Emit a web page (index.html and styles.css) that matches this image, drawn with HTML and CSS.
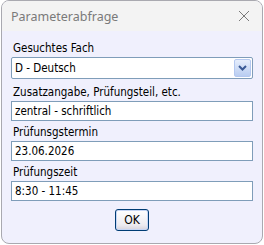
FILE: index.html
```html
<!DOCTYPE html>
<html>
<head>
<meta charset="utf-8">
<link rel="stylesheet" href="styles.css">
</head>
<body>
<div class="window">
  <div class="titlebar">
    <span class="title">Parameterabfrage</span>
    <svg class="close" width="12" height="12" viewBox="0 0 12 12"><path d="M1 1 L11 11 M11 1 L1 11" stroke="#7a7a7a" stroke-width="1" fill="none"/></svg>
  </div>
  <div class="content">
    <div class="label">Gesuchtes Fach</div>
    <div class="select">
      <span class="value">D - Deutsch</span>
      <span class="dropbtn"><svg width="9" height="6" viewBox="0 0 9 6"><path d="M1 1 L4.5 4.5 L8 1" stroke="#3a5a96" stroke-width="2" fill="none"/></svg></span>
    </div>
    <div class="label">Zusatzangabe, Prüfungsteil, etc.</div>
    <div class="input">zentral - schriftlich</div>
    <div class="label">Prüfunsgstermin</div>
    <div class="input">23.06.2026</div>
    <div class="label">Prüfungszeit</div>
    <div class="input">8:30 - 11:45</div>
    <div class="actions"><button class="ok">OK</button></div>
  </div>
</div>
</body>
</html>
```
FILE: styles.css
```css
html, body { margin: 0; padding: 0; background: #ffffff; }
body { padding-left: 1px; }
.window {
  width: 260px; height: 242px;
  border: 1px solid #a9a9b0;
  border-radius: 8px;
  overflow: hidden;
  background: #f0f0fd;
  display: flex; flex-direction: column;
}
.titlebar {
  height: 30px;
  background: #f3f3f3;
  display: flex; align-items: center; justify-content: space-between;
  padding: 0 12px 0 9px;
}
.title { font-family: "Noto Sans", "Open Sans", sans-serif; font-size: 12.5px; color: #7a7a7a; }
.close { display: block; }
.content {
  padding: 10px 9px 0 9px;
  font-family: "DejaVu Sans Condensed", "DejaVu Sans", sans-serif;
  font-size: 11.5px;
  color: #000;
  display: flex; flex-direction: column;
}
.label { height: 14px; line-height: 14px; padding-left: 2px; margin-bottom: 2px; }
.select {
  height: 20px;
  border: 1px solid #7f9db9;
  border-radius: 2px;
  background: #fff;
  display: flex; align-items: center; justify-content: space-between;
  padding: 0 1px 0 3px;
  margin-bottom: 6px;
}
.dropbtn {
  width: 15px; height: 16px;
  border: 1px solid #b4c8f0;
  border-radius: 2px;
  background: linear-gradient(#e6eefc, #b9cdf1);
  display: flex; align-items: center; justify-content: center;
}
.dropbtn svg { display: block; }
.input {
  height: 18px;
  line-height: 18px;
  border: 1px solid #7f9db9;
  background: #fff;
  padding: 0 3px;
  margin-bottom: 4px;
}
.actions { display: flex; justify-content: center; padding-top: 4px; }
.ok {
  width: 34px; height: 22px;
  border: 1px solid #003c74;
  border-radius: 3px;
  background: linear-gradient(#ffffff, #ecebf0 75%, #d6d3dc);
  box-shadow: inset 0 0 0 1px #c6d6f5;
  font-family: "DejaVu Sans Condensed", "DejaVu Sans", sans-serif;
  font-size: 12px;
  color: #000;
  padding: 0;
}
```
